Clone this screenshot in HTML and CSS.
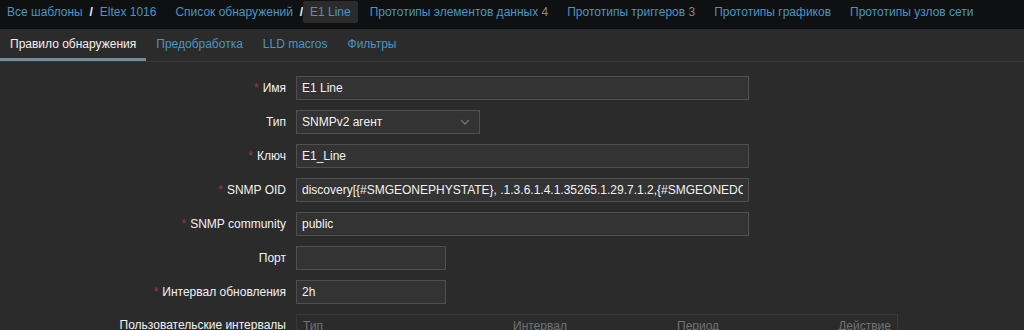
FILE: index.html
```html
<!DOCTYPE html>
<html lang="ru">
<head>
    <meta charset="UTF-8">
    <meta name="viewport" content="width=device-width, initial-scale=1.0">
    <title>Правило обнаружения</title>
    <link rel="stylesheet" href="styles.css">
</head>
<body>
    <div class="crumbs-bar">
        <ul class="crumbs">
            <li><a href="#">Все шаблоны</a></li>
            <li class="sep">/</li>
            <li><a href="#">Eltex 1016</a></li>
        </ul>
        <ul class="crumbs">
            <li><a href="#">Список обнаружений</a></li>
            <li class="sep">/</li>
            <li><a href="#" class="selected">E1 Line</a></li>
        </ul>
        <ul class="crumbs">
            <li><a href="#">Прототипы элементов данных</a> <sup>4</sup></li>
        </ul>
        <ul class="crumbs">
            <li><a href="#">Прототипы триггеров</a> <sup>3</sup></li>
        </ul>
        <ul class="crumbs">
            <li><a href="#">Прототипы графиков</a></li>
        </ul>
        <ul class="crumbs">
            <li><a href="#">Прототипы узлов сети</a></li>
        </ul>
    </div>

    <div class="tabs">
        <a href="#" class="tab active">Правило обнаружения</a>
        <a href="#" class="tab">Предобработка</a>
        <a href="#" class="tab">LLD macros</a>
        <a href="#" class="tab">Фильтры</a>
    </div>

    <form class="form-grid">
        <label class="req" for="name">Имя</label>
        <input class="wide" type="text" id="name" value="E1 Line">

        <label for="type">Тип</label>
        <div class="select">
            <span>SNMPv2 агент</span>
            <svg width="10" height="6" viewBox="0 0 10 6"><path d="M1 1l4 4 4-4" fill="none" stroke="#6e6e6e" stroke-width="1.6"/></svg>
        </div>

        <label class="req" for="key">Ключ</label>
        <input class="wide" type="text" id="key" value="E1_Line">

        <label class="req" for="oid">SNMP OID</label>
        <input class="wide" type="text" id="oid" value="discovery[{#SMGEONEPHYSTATE}, .1.3.6.1.4.1.35265.1.29.7.1.2,{#SMGEONEDCHSTATE}, .1.3.6.1.4.1.35265.1.29.7.1.3]">

        <label class="req" for="community">SNMP community</label>
        <input class="wide" type="text" id="community" value="public">

        <label for="port">Порт</label>
        <input class="short" type="text" id="port" value="">

        <label class="req" for="delay">Интервал обновления</label>
        <input class="short" type="text" id="delay" value="2h">

        <label class="top">Пользовательские интервалы</label>
        <div class="intervals">
            <span class="c-type">Тип</span>
            <span class="c-int">Интервал</span>
            <span class="c-per">Период</span>
            <span class="c-act">Действие</span>
        </div>
    </form>
</body>
</html>
```

FILE: styles.css
```css
body {
    margin: 0;
    background-color: #2b2b2b;
    color: #f2f2f2;
    font-family: "Liberation Sans", Arial, sans-serif;
    font-size: 12px;
}
a {
    color: #4796c4;
    text-decoration: none;
}

/* breadcrumbs */
.crumbs-bar {
    display: flex;
    height: 29px;
    padding-top: 1px;
    box-sizing: border-box;
    background-color: #0e1012;
}
.crumbs {
    display: flex;
    list-style: none;
    margin: 0 5px 0 0;
    padding: 0;
}
.crumbs li {
    line-height: 22px;
    white-space: nowrap;
}
.crumbs a {
    display: inline-block;
    padding: 0 7px;
}
.crumbs sup {
    vertical-align: baseline;
    font-size: 12px;
    color: #888;
    margin-left: -7px;
    padding-right: 7px;
}
.crumbs .sep {
    color: #f2f2f2;
    width: 3px;
    display: flex;
    justify-content: center;
    font-weight: bold;
}
.crumbs a.selected {
    background-color: #2b2b2b;
    border-radius: 2px;
}

/* tabs */
.tabs {
    display: flex;
    height: 32px;
    border-bottom: 1px solid #383838;
}
.tab {
    padding: 0 10px;
    line-height: 30px;
    border-bottom: 3px solid transparent;
}
.tab.active {
    color: #f2f2f2;
    border-bottom-color: #768d99;
}

/* form */
.form-grid {
    display: grid;
    grid-template-columns: 286px auto;
    column-gap: 10px;
    row-gap: 10px;
    padding-top: 14px;
    justify-items: start;
    align-items: center;
}
.form-grid label {
    justify-self: end;
    white-space: nowrap;
}
.form-grid label.top {
    align-self: start;
    padding-top: 4px;
}
.form-grid label.req::before {
    content: "*";
    color: #9b3b3b;
    margin-right: 4px;
}
.form-grid input,
.select {
    height: 24px;
    box-sizing: border-box;
    background-color: #333;
    border: 1px solid #4f4f4f;
    color: #f2f2f2;
    font-family: "Liberation Sans", Arial, sans-serif;
    font-size: 12px;
    padding: 0 5px;
    outline: none;
}
.wide {
    width: 453px;
}
.short {
    width: 150px;
}
.select {
    width: 184px;
    display: flex;
    align-items: center;
    justify-content: space-between;
    padding-right: 9px;
}
.intervals {
    width: 602px;
    height: 30px;
    box-sizing: border-box;
    border: 1px solid #383838;
    display: grid;
    grid-template-columns: 210px 164px 1fr auto;
    padding: 4px 6px 0;
    color: #737373;
    align-self: start;
}
.c-act {
    text-align: right;
}
```
